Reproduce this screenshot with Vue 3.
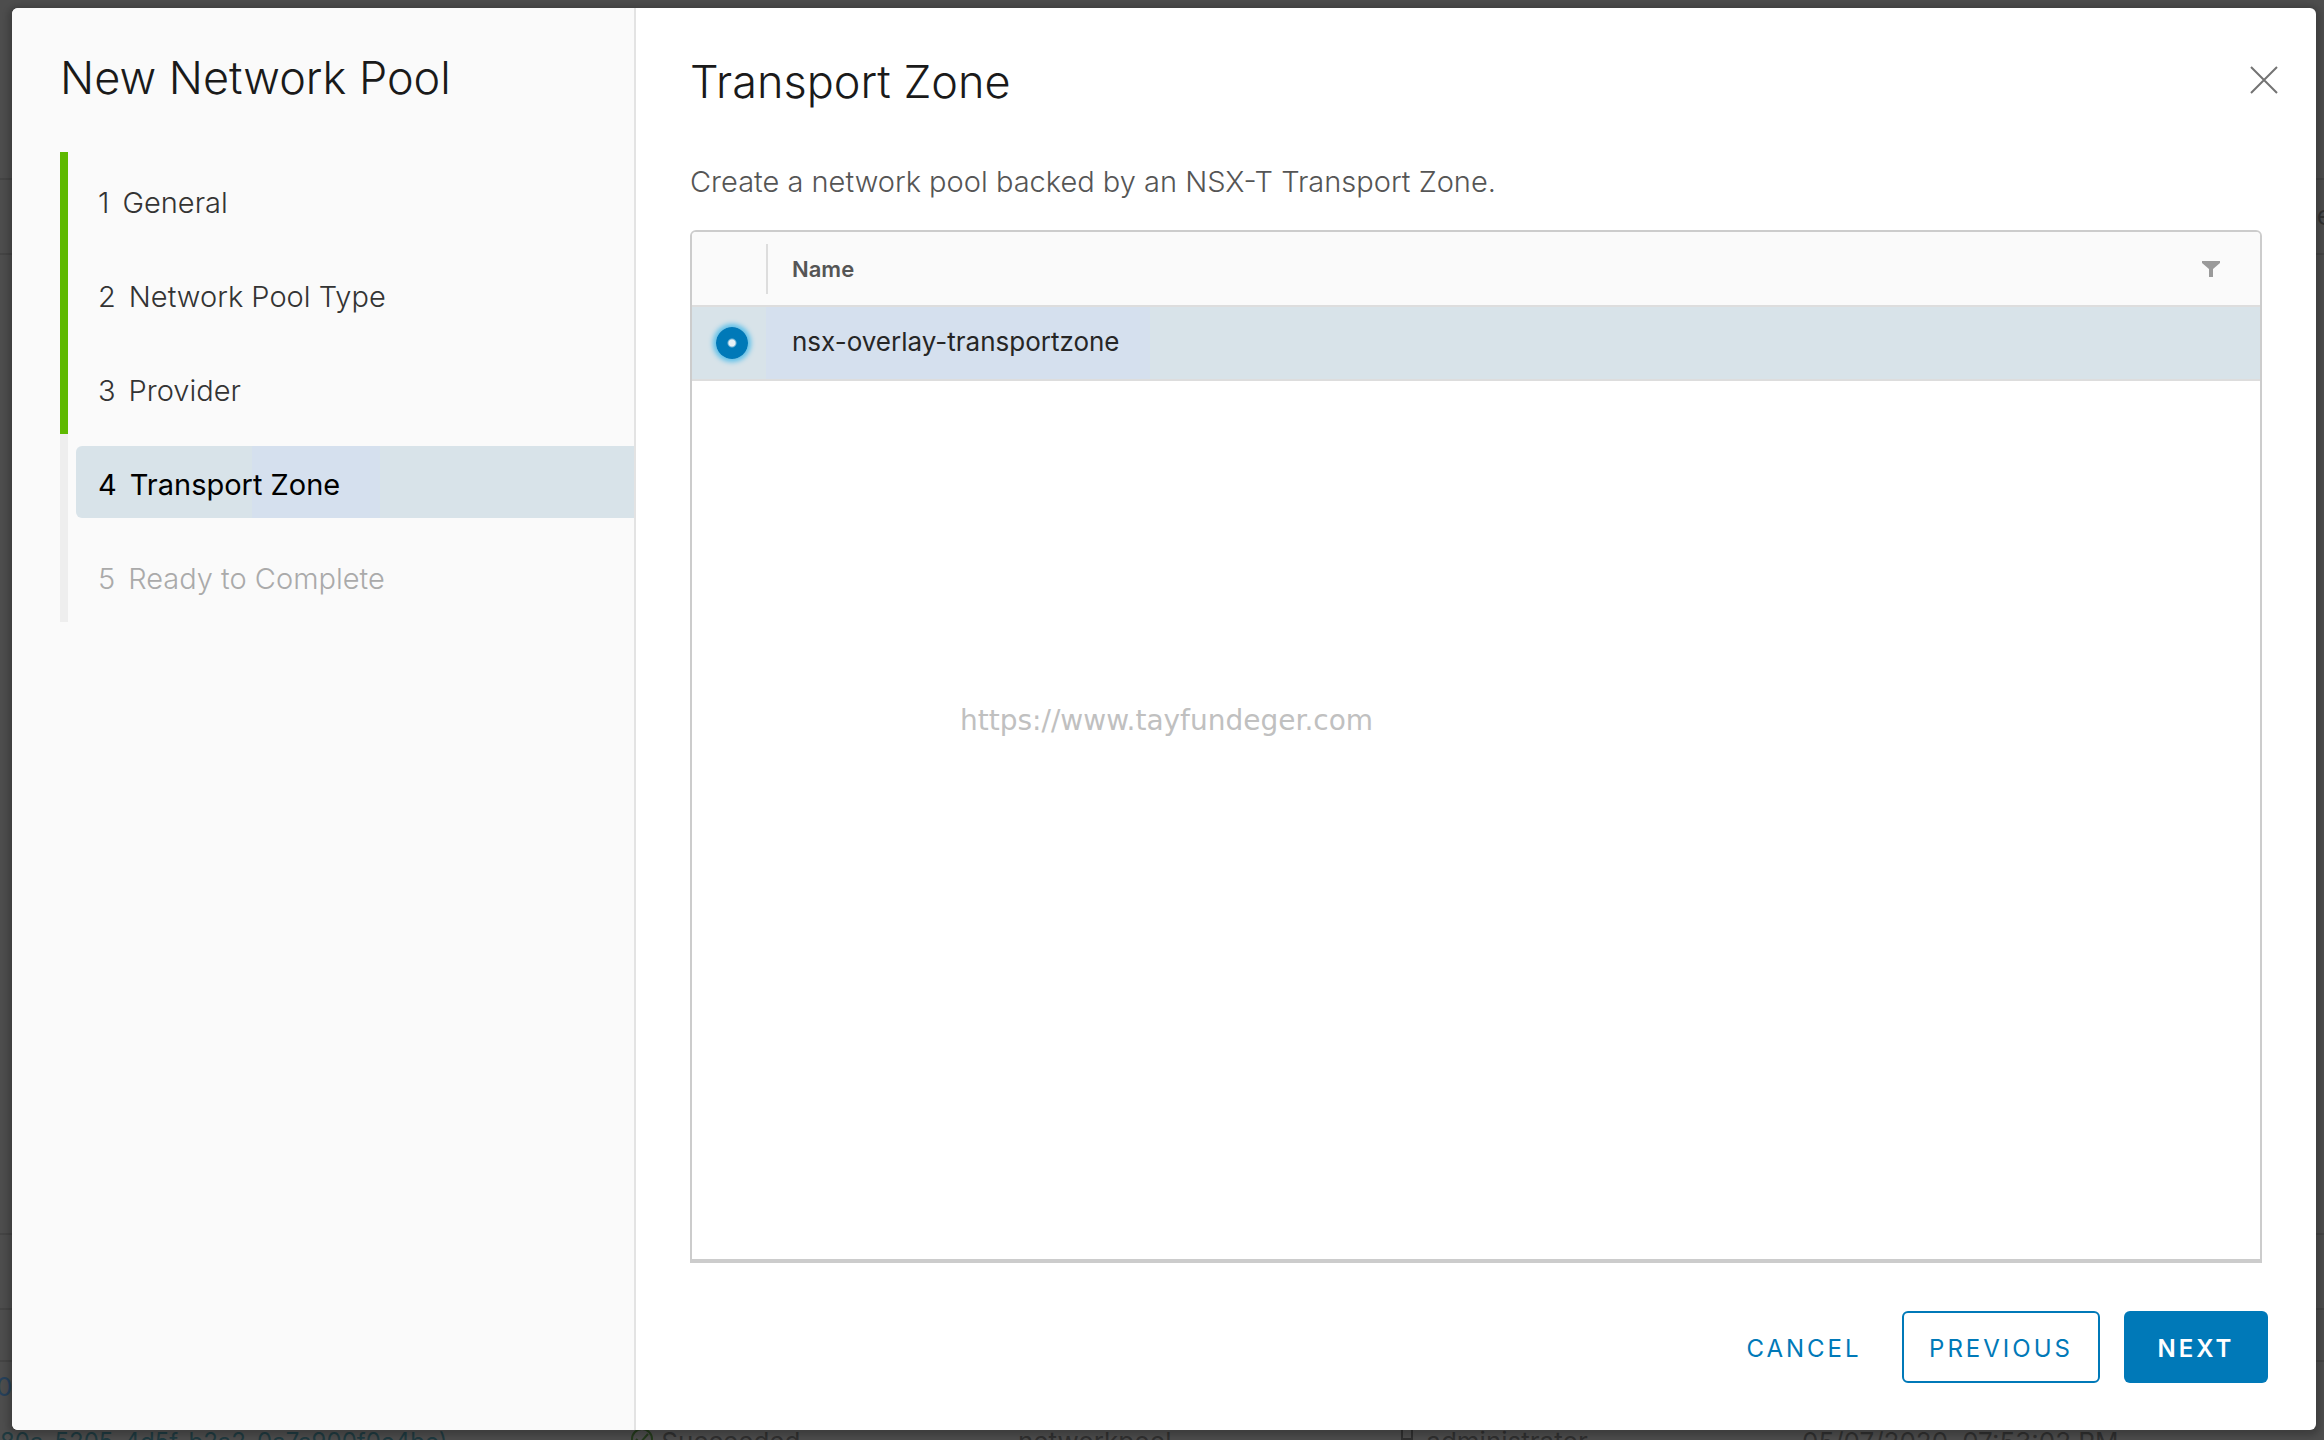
<script setup>
import { ref } from 'vue'

const steps = [
  { label: 'General', state: 'done' },
  { label: 'Network Pool Type', state: 'done' },
  { label: 'Provider', state: 'done' },
  { label: 'Transport Zone', state: 'current' },
  { label: 'Ready to Complete', state: 'todo' },
]
const zones = ['nsx-overlay-transportzone']
const selected = ref(zones[0])
</script>

<template>
  <div class="screen">
    <div class="backdrop" aria-hidden="true">
      <div class="rule rule-a"></div>
      <div class="rule rule-b"></div>
      <div class="rule rule-c"></div>
      <div class="rule rule-d"></div>
      <div class="rule rule-e"></div>
      <span class="edge-left">80</span>
      <span class="edge-right">e</span>
      <div class="task-row">
        <span class="task-id">80a-5205-4d5f-b2a2-0a7a900f0e4be)</span>
        <span class="task-status">
          <svg viewBox="0 0 24 24" width="24" height="24"><circle cx="12" cy="12" r="10" fill="none" stroke="currentColor" stroke-width="2" /><path d="M6 12l4 4 8-9" fill="none" stroke="currentColor" stroke-width="2" /></svg>
          Succeeded
        </span>
        <span class="task-type">networkpool</span>
        <span class="task-user">
          <svg viewBox="0 0 24 24" width="24" height="24"><path d="M7 2h10v10H7zM2 23c0-6 4-8 10-8s10 2 10 8" fill="none" stroke="currentColor" stroke-width="2" /></svg>
          administrator
        </span>
        <span class="task-date">05/07/2020, 07:53:02 PM</span>
      </div>
    </div>

    <section class="dialog" role="dialog" aria-labelledby="wizard-title">
      <aside class="sidebar">
        <h1 id="wizard-title" class="wizard-title">New Network Pool</h1>
        <ol class="steps">
          <li v-for="(step, i) in steps" :key="step.label" class="step" :class="step.state">
            <button class="step-button" type="button" :disabled="step.state === 'todo'">
              <span class="step-number">{{ i + 1 }}</span>
              <span>{{ step.label }}</span>
            </button>
          </li>
        </ol>
      </aside>

      <main class="content">
        <header class="content-header">
          <h2 class="page-title">Transport Zone</h2>
          <button class="close" type="button" aria-label="Close">
            <svg viewBox="0 0 28 28" width="28" height="28"><path d="M1 1L27 27M27 1L1 27" fill="none" stroke="#737373" stroke-width="2" /></svg>
          </button>
        </header>
        <p class="intro">Create a network pool backed by an NSX-T Transport Zone.</p>

        <div class="grid">
          <table class="table">
            <thead>
              <tr>
                <th class="pick" aria-label="Select"></th>
                <th class="name">
                  <div class="name-head">
                    <span>Name</span>
                    <button class="filter" type="button" aria-label="Filter by name">
                      <svg viewBox="0 0 18 16" width="18" height="16"><path d="M0 0h18v2l-7 6v8H7V8L0 2z" fill="#9a9a9a" /></svg>
                    </button>
                  </div>
                </th>
              </tr>
            </thead>
            <tbody>
              <tr v-for="(zone, i) in zones" :key="zone">
                <td class="pick"><input :id="'zone-' + i" v-model="selected" class="radio" type="radio" name="zone" :value="zone" /></td>
                <td class="name"><label class="zone-label" :for="'zone-' + i">{{ zone }}</label></td>
              </tr>
            </tbody>
          </table>
          <p class="watermark">https://www.tayfundeger.com</p>
        </div>

        <footer class="actions">
          <button class="btn link" type="button">CANCEL</button>
          <button class="btn outline" type="button">PREVIOUS</button>
          <button class="btn primary" type="button">NEXT</button>
        </footer>
      </main>
    </section>
  </div>
</template>

<style>
body {
  background: #4d4d4d;
}
</style>

<style scoped>
.screen {
  position: relative;
  box-sizing: border-box;
  display: flex;
  height: 100vh;
  padding: 8px 8px 10px 12px;
  overflow: hidden;
  background: #4d4d4d;
  font-family: Inter, "Liberation Sans", sans-serif;
}

h1, h2, p, ol {
  margin: 0;
  padding: 0;
  font-weight: 400;
}

button {
  font-family: inherit;
  cursor: pointer;
}

/* Dimmed page behind the dialog */
.backdrop {
  position: absolute;
  inset: 0;
  color: #303030;
  font-size: 26px;
}
.rule {
  position: absolute;
  right: 0;
  left: 0;
  height: 2px;
  background: #444;
}
.rule-a { top: 178px; }
.rule-b { top: 253px; }
.rule-c { top: 1233px; }
.rule-d { top: 1308px; }
.rule-e { top: 1360px; }
.edge-left {
  position: absolute;
  bottom: 38px;
  left: -20px;
  color: #26405a;
}
.edge-right {
  position: absolute;
  top: 200px;
  right: -8px;
}
.task-row {
  position: absolute;
  right: 0;
  bottom: -18px;
  left: 0;
  display: grid;
  grid-template-columns: 630fr 388fr 377fr 407fr 522fr;
  line-height: 32px;
  white-space: nowrap;
}
.task-id {
  color: #1f3a40;
  font-size: 24px;
}
.task-status svg { color: #243a1c; }

.dialog {
  position: relative;
  display: flex;
  flex: 1;
  overflow: hidden;
  border-radius: 6px;
  background: #fff;
  box-shadow: 0 2px 6px 4px rgba(0, 0, 0, 0.2);
}

.sidebar {
  box-sizing: border-box;
  flex: 0 0 624px;
  padding: 40px 0 0 48px;
  border-right: 2px solid #e3e3e3;
  background: #fafafa;
}
.wizard-title,
.page-title {
  color: #1a1a1a;
  font-size: 45px;
  font-weight: 300;
  line-height: 60px;
}
.steps {
  margin-top: 44px;
  list-style: none;
}
.step {
  height: 94px;
  box-sizing: border-box;
  padding: 12px 0 10px 8px;
  border-left: 8px solid #eee;
}
.step.done { border-left-color: #5eb900; }
.step-button {
  display: flex;
  gap: 13px;
  align-items: center;
  width: 100%;
  height: 72px;
  padding: 4px 0 0 22px;
  border: 0;
  border-radius: 6px 0 0 6px;
  background: none;
  color: #333;
  font-size: 29px;
  font-weight: 300;
  text-align: left;
}
.current .step-button {
  background: linear-gradient(90deg, #d8e3e9 176px, #d5e0ee 176px, #d5e0ee 304px, #d8e3e9 304px);
  color: #000;
  font-weight: 400;
  font-size: 29px;
}
.todo .step-button { color: #aaa; }

.content {
  display: flex;
  flex: 1;
  flex-direction: column;
  min-width: 0;
  padding: 44px 48px 47px 54px;
}
.content-header {
  display: flex;
  align-items: center;
  justify-content: space-between;
}
.close {
  width: 28px;
  height: 28px;
  margin: 0 -10px 4px 0;
  padding: 0;
  border: 0;
  background: none;
}
.close svg, .filter svg { display: block; }
.intro {
  margin-top: 50px;
  color: #555;
  font-size: 29px;
  font-weight: 300;
  line-height: 40px;
}
.grid {
  flex: 1;
  margin: 28px 6px 0 0;
  border: 2px solid #ccc;
  border-bottom-width: 4px;
  border-radius: 6px 6px 0 0;
  overflow: hidden;
}
.table {
  width: 100%;
  border-collapse: collapse;
  table-layout: fixed;
}
th, td {
  box-sizing: border-box;
  height: 74px;
  padding: 0;
  border-bottom: 2px solid #ddd;
  text-align: left;
}
th {
  background: #fafafa;
  color: #555;
  font-size: 22px;
  font-weight: 600;
}
td {
  background: #d8e3e9;
  color: #262626;
  font-size: 26px;
}
.pick { width: 74px; }
.name-head {
  display: flex;
  align-items: center;
  justify-content: space-between;
  height: 50px;
  padding: 0 40px 0 24px;
  border-left: 2px solid #ddd;
}
.filter {
  padding: 0;
  border: 0;
  background: none;
}
.zone-label {
  display: inline-block;
  padding: 0 30px 0 26px;
  background: #d5e0ee;
  line-height: 70px;
  padding-bottom: 2px;
  vertical-align: top;
}
.radio {
  display: block;
  width: 32px;
  height: 32px;
  margin: 0 auto 0 24px;
  appearance: none;
  border-radius: 50%;
  background: radial-gradient(circle, #e8f1f6 3px, #0079b8 5px);
  box-shadow: 0 0 5px 3px #5cc0ea;
}
.watermark {
  margin: 322px 0 0 268px;
  color: #c0c0c0;
  font-family: "DejaVu Sans", sans-serif;
  font-size: 28px;
  line-height: 36px;
}
.actions {
  display: flex;
  justify-content: flex-end;
  margin-top: 48px;
}
.btn {
  height: 72px;
  padding: 2px 0 0;
  border: 2px solid transparent;
  border-radius: 6px;
  background: #fff;
  color: #0079b8;
  font-size: 24px;
  letter-spacing: 3px;
}
.link {
  width: 160px;
  margin-right: 18px;
}
.outline {
  width: 198px;
  margin-right: 24px;
  border-color: #0079b8;
}
.primary {
  width: 144px;
  background: #0079b8;
  color: #fff;
  font-weight: 600;
}
</style>
